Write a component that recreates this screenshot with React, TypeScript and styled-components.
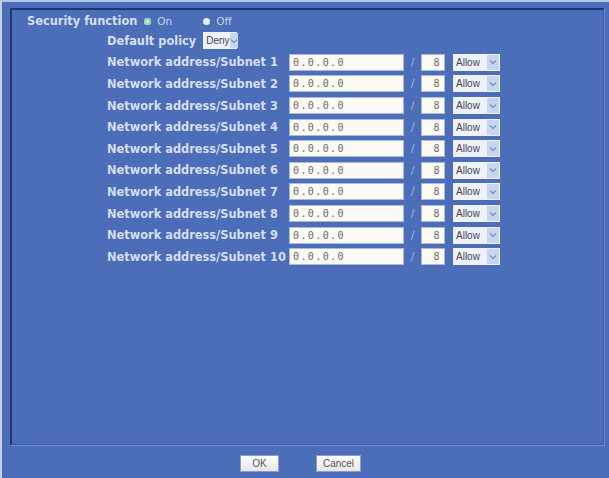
import * as React from "react";
import styled, { createGlobalStyle } from "styled-components";

const Global = createGlobalStyle`
  html, body {
    margin: 0;
    padding: 0;
    background: #4c6db8;
  }
  body {
    font-family: "DejaVu Sans", Verdana, sans-serif;
  }
`;

const Page = styled.div`
  width: 609px;
  height: 478px;
  box-sizing: border-box;
  border-top: 2px solid #b7c6e6;
  border-left: 2px solid #c4d0ea;
  background: #4c6db8;
  display: flex;
  flex-direction: column;
`;

const Panel = styled.div`
  margin: 6px 5px 0 8px;
  height: 437px;
  box-sizing: border-box;
  border-top: 2px solid #1f3577;
  border-left: 2px solid #1f3577;
  border-right: 1px solid #3d5ca6;
  border-bottom: 1px solid #3d5ca6;
  box-shadow: 1px 1px 0 #6d8bcc;
  padding: 2px 0 0 15px;
  display: flex;
  flex-direction: column;
`;

const Label = styled.span`
  font-size: 11.4px;
  font-weight: bold;
  color: #d6dff2;
  white-space: nowrap;
`;

const TopRow = styled.div`
  display: flex;
  align-items: center;
  height: 18px;
`;

const Radio = styled.span<{ $on?: boolean }>`
  width: 7px;
  height: 7px;
  border-radius: 50%;
  background: ${(p) => (p.$on ? "#8ed6a8" : "#e8eef8")};
  box-shadow: ${(p) => (p.$on ? "inset 0 0 0 2px #8ed6a8, inset 0 0 0 4px #e8f8ee" : "none")};
  margin-left: ${(p) => (p.$on ? "7px" : "31px")};
  margin-right: 6px;
`;

const RadioText = styled.span`
  font-size: 10.5px;
  color: #c9d5ee;
`;

const Form = styled.div`
  margin-left: 80px;
  display: flex;
  flex-direction: column;
`;

const Row = styled.div`
  display: flex;
  align-items: center;
  height: 21.6px;
`;

const RowLabel = styled(Label)`
  width: 182px;
`;

const PolicyLabel = styled(Label)`
  margin-right: -1px;
`;

const TextBox = styled.div<{ $w: number; $right?: boolean }>`
  width: ${(p) => p.$w}px;
  height: 17px;
  box-sizing: border-box;
  background: #fbfaf4;
  border: 1px solid #aab9dc;
  font-family: "DejaVu Sans Mono", monospace;
  font-size: 10px;
  letter-spacing: 1.4px;
  color: #6a6a6a;
  display: flex;
  align-items: center;
  justify-content: ${(p) => (p.$right ? "flex-end" : "flex-start")};
  padding: 0 3px;
`;

const Slash = styled.span`
  width: 17px;
  text-align: center;
  font-size: 11px;
  color: #9fb8e6;
`;

const Select = styled.div<{ $w: number }>`
  width: ${(p) => p.$w}px;
  height: 17px;
  box-sizing: border-box;
  background: #eef2fa;
  display: flex;
  align-items: center;
  margin-left: 8px;
  font-family: "Liberation Sans", Arial, sans-serif;
  font-size: 10px;
  color: #445;
  padding-left: 3px;
`;

const Arrow = styled.span`
  margin-left: auto;
  width: 12px;
  height: 15px;
  margin-right: 1px;
  background: #c7d6f0;
  display: flex;
  align-items: center;
  justify-content: center;
`;

const Footer = styled.div`
  display: flex;
  justify-content: center;
  gap: 37px;
  padding-top: 10px;
  padding-right: 10px;
`;

const Button = styled.button<{ $w: number }>`
  width: ${(p) => p.$w}px;
  height: 17px;
  border: 1px solid #8d9dc4;
  background: linear-gradient(#ffffff, #e6e6e6);
  font-family: "Liberation Sans", Arial, sans-serif;
  font-size: 10px;
  color: #555;
  padding: 0;
`;

const Chevron = () => (
  <svg width="8" height="6" viewBox="0 0 8 6">
    <path d="M1 1.5 L4 4.5 L7 1.5" stroke="#8091b8" strokeWidth="1.4" fill="none" />
  </svg>
);

const Dropdown = ({ w, value }: { w: number; value: string }) => (
  <Select $w={w}>
    {value}
    <Arrow>
      <Chevron />
    </Arrow>
  </Select>
);

const rows = [1, 2, 3, 4, 5, 6, 7, 8, 9, 10];

export default function App() {
  return (
    <>
      <Global />
      <Page>
        <Panel>
          <TopRow>
            <Label>Security function</Label>
            <Radio $on />
            <RadioText>On</RadioText>
            <Radio />
            <RadioText>Off</RadioText>
          </TopRow>
          <Form>
            <Row>
              <PolicyLabel>Default policy</PolicyLabel>
              <Dropdown w={34} value="Deny" />
            </Row>
            {rows.map((n) => (
              <Row key={n}>
                <RowLabel>Network address/Subnet {n}</RowLabel>
                <TextBox $w={115}>0.0.0.0</TextBox>
                <Slash>/</Slash>
                <TextBox $w={24} $right>
                  8
                </TextBox>
                <Dropdown w={47} value="Allow" />
              </Row>
            ))}
          </Form>
        </Panel>
        <Footer>
          <Button $w={39}>OK</Button>
          <Button $w={45}>Cancel</Button>
        </Footer>
      </Page>
    </>
  );
}
